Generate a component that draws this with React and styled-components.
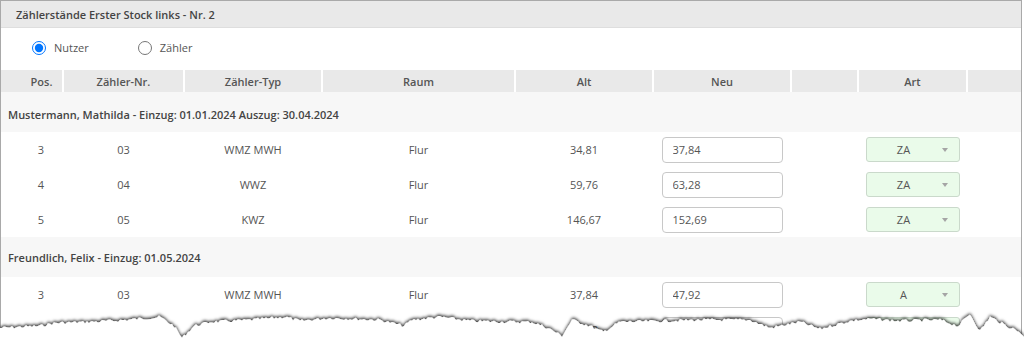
import React from 'react'
import styled, { createGlobalStyle } from 'styled-components'

const GlobalStyle = createGlobalStyle`
  html, body { margin: 0; padding: 0; background: #fff; }
  body {
    font-family: "Open Sans", "DejaVu Sans", sans-serif;
    font-size: 11px;
    color: #555;
  }
`

const Page = styled.div`
  position: relative;
  width: 1024px;
  height: 341px;
  overflow: hidden;
  background: #fff;
`

const Panel = styled.div`
  width: 1020px;
  height: 380px;
  border: 1px solid #a9a9a9;
  border-bottom: none;
`

const TitleBar = styled.div`
  height: 26px;
  display: flex;
  align-items: center;
  padding-left: 15px;
  background: #e9e9e9;
  border-bottom: 1px solid #dedede;
  font-weight: 600;
  color: #444;
`

const RadioRow = styled.div`
  height: 42px;
  display: flex;
  align-items: center;
  gap: 49px;
  padding: 0 0 3px 31px;
  box-sizing: border-box;
`

const RadioLabel = styled.label`
  display: flex;
  align-items: center;
  gap: 8px;
  color: #555;
`

const Radio = styled.input`
  width: 14px;
  height: 14px;
  margin: 0;
`

const Table = styled.table`
  width: 1020px;
  table-layout: fixed;
  border-collapse: collapse;
`

const HeadCell = styled.th`
  height: 22px;
  padding: 0 0 0 ${(p) => p.$indent || 0}px;
  background: #e9e9e9;
  border-left: 2px solid #fff;
  font-weight: 600;
  color: #555;
  text-align: center;
  &:first-child { border-left: none; }
`

const GroupCell = styled.td`
  height: 40px;
  padding: ${(p) => p.$shift || 0}px 0 0 7px;
  box-sizing: border-box;
  background: #f7f7f7;
  font-weight: 600;
  color: #444;
`

const Cell = styled.td`
  height: 35px;
  padding: 0 0 0 ${(p) => p.$indent || 0}px;
  text-align: center;
  color: #555;
`

const ValueInput = styled.input`
  display: inline-block;
  width: 121px;
  height: 26px;
  box-sizing: border-box;
  padding: 0 10px;
  border: 1px solid #c8c8c8;
  border-radius: 4px;
  font: inherit;
  color: #555;
  vertical-align: middle;
`

const SelectBox = styled.div`
  position: relative;
  display: inline-flex;
  align-items: center;
  justify-content: center;
  width: 94px;
  height: 25px;
  box-sizing: border-box;
  padding-right: 18px;
  background: #eafbea;
  border: 1px solid #cad9cb;
  border-radius: 3px;
  color: #555;
  vertical-align: middle;
  &::after {
    content: "";
    position: absolute;
    right: 11px;
    top: 10px;
    border-left: 3px solid transparent;
    border-right: 3px solid transparent;
    border-top: 4px solid #a5a5a5;
  }
`

const TornEdge = styled.svg`
  position: absolute;
  left: 0;
  bottom: 0;
`

const columns = [
  { title: 'Pos.', width: 62, indent: 20 },
  { title: 'Zähler-Nr.', width: 121 },
  { title: 'Zähler-Typ', width: 138 },
  { title: 'Raum', width: 193 },
  { title: 'Alt', width: 138 },
  { title: 'Neu', width: 138 },
  { title: '', width: 67 },
  { title: 'Art', width: 109 },
  { title: '', width: 54 },
]

const groups = [
  {
    name: 'Mustermann, Mathilda - Einzug: 01.01.2024 Auszug: 30.04.2024',
    shift: 4,
    rows: [
      ['3', '03', 'WMZ MWH', 'Flur', '34,81', '37,84', 'ZA'],
      ['4', '04', 'WWZ', 'Flur', '59,76', '63,28', 'ZA'],
      ['5', '05', 'KWZ', 'Flur', '146,67', '152,69', 'ZA'],
    ],
  },
  {
    name: 'Freundlich, Felix - Einzug: 01.05.2024',
    shift: 0,
    rows: [
      ['3', '03', 'WMZ MWH', 'Flur', '37,84', '47,92', 'A'],
      ['4', '04', 'WWZ', 'Flur', '63,28', '80,86', 'A'],
    ],
  },
]

// rough tear line, y measured from page top
const anchors = [
  [0, 328], [40, 326], [55, 323], [90, 322], [125, 320], [160, 317], [174, 326],
  [182, 338], [194, 326], [210, 322], [250, 320], [285, 317], [300, 321], [330, 318],
  [380, 320], [404, 326], [412, 320], [440, 317], [470, 321], [512, 322], [532, 322],
  [548, 328], [562, 336], [572, 320], [590, 326], [603, 332], [620, 322], [700, 320],
  [750, 320], [770, 328], [800, 322], [820, 329], [850, 321], [870, 319], [900, 321],
  [940, 320], [958, 326], [970, 314], [980, 331], [990, 317], [1005, 325], [1020, 332],
  [1024, 337],
]

const EDGE_TOP = 300

function tearPath() {
  let seed = 7
  const rnd = () => {
    seed = (seed * 9301 + 49297) % 233280
    return seed / 233280
  }
  const pts = []
  for (let i = 0; i < anchors.length - 1; i++) {
    const [x0, y0] = anchors[i]
    const [x1, y1] = anchors[i + 1]
    for (let x = x0; x < x1; x += 2) {
      const t = (x - x0) / (x1 - x0)
      const y = y0 + (y1 - y0) * t + (rnd() - 0.5) * 3.2
      pts.push(`${x},${(y - EDGE_TOP).toFixed(1)}`)
    }
  }
  pts.push(`1024,${337 - EDGE_TOP}`)
  return `M0,${341 - EDGE_TOP} L${pts.join(' L')} L1024,${341 - EDGE_TOP} Z`
}

export default function App() {
  return (
    <Page>
      <GlobalStyle />
      <Panel>
        <TitleBar>Zählerstände Erster Stock links - Nr. 2</TitleBar>
        <RadioRow>
          <RadioLabel>
            <Radio type="radio" name="mode" defaultChecked />
            Nutzer
          </RadioLabel>
          <RadioLabel>
            <Radio type="radio" name="mode" />
            Zähler
          </RadioLabel>
        </RadioRow>
        <Table>
          <colgroup>
            {columns.map((c, i) => <col key={i} style={{ width: c.width }} />)}
          </colgroup>
          <thead>
            <tr>
              {columns.map((c, i) => (
                <HeadCell key={i} $indent={c.indent}>{c.title}</HeadCell>
              ))}
            </tr>
          </thead>
          <tbody>
            {groups.map((g) => (
              <React.Fragment key={g.name}>
                <tr>
                  <GroupCell colSpan={9} $shift={g.shift}>{g.name}</GroupCell>
                </tr>
                {g.rows.map((r, i) => (
                  <tr key={i}>
                    <Cell $indent={18}>{r[0]}</Cell>
                    <Cell>{r[1]}</Cell>
                    <Cell>{r[2]}</Cell>
                    <Cell>{r[3]}</Cell>
                    <Cell>{r[4]}</Cell>
                    <Cell><ValueInput defaultValue={r[5]} /></Cell>
                    <Cell />
                    <Cell><SelectBox>{r[6]}</SelectBox></Cell>
                    <Cell />
                  </tr>
                ))}
              </React.Fragment>
            ))}
          </tbody>
        </Table>
      </Panel>
      <TornEdge width="1024" height={341 - EDGE_TOP} viewBox={`0 0 1024 ${341 - EDGE_TOP}`}>
        <defs>
          <filter id="tearShadow" x="-5%" y="-50%" width="110%" height="200%">
            <feDropShadow dx="0" dy="-1.5" stdDeviation="1.8" floodColor="#000" floodOpacity="0.8" />
          </filter>
        </defs>
        <path d={tearPath()} fill="#fff" filter="url(#tearShadow)" />
      </TornEdge>
    </Page>
  )
}
